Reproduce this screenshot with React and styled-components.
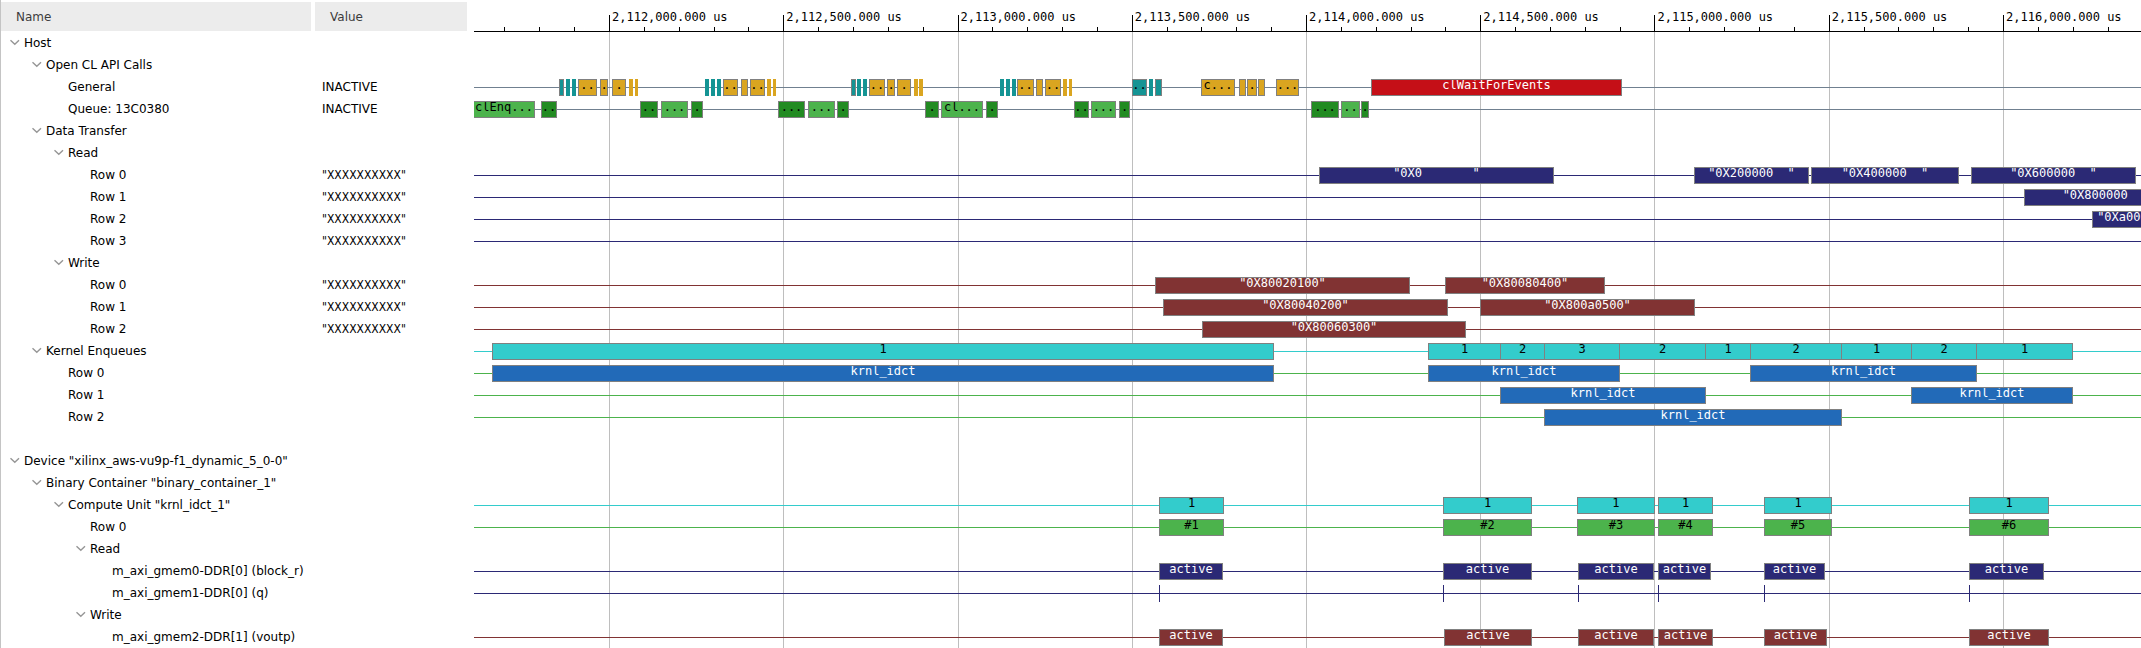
import React from "react";
import styled, { createGlobalStyle } from "styled-components";

const GlobalStyle = createGlobalStyle`
  body {
    margin: 0;
    background: #fff;
    color: #000;
    font: 12px/22px "DejaVu Sans", Verdana, sans-serif;
    overflow-x: hidden;
  }
`;

const colors = {
  slate: "#708090",
  navy: "#2b2975",
  maroon: "#813333",
  cyan: "#33cccc",
  blue: "#226ab8",
  green: "#4cb34c",
  forest: "#228b22",
  gold: "#daa520",
  teal: "#149494",
  red: "#c50f17",
};

const darkText = ["cyan", "green", "forest", "gold", "teal"];

// The visible time window, in timeline units.
const VIEW_START = 474;
const VIEW_SPAN = 1667;
const at = (x) => `${((x - VIEW_START) / VIEW_SPAN) * 100}%`;
const span = (w) => `${(w / VIEW_SPAN) * 100}%`;

const MAJOR_FIRST = 609;
const MAJOR_STEP = 174.25;
const majors = Array.from({ length: 9 }, (_, i) => ({
  x: MAJOR_FIRST + i * MAJOR_STEP,
  label: `${(2112000 + i * 500).toLocaleString("en-US")}.000 us`,
}));
const minors = Array.from({ length: 47 }, (_, i) => i - 3)
  .filter((i) => i % 5 !== 0)
  .map((i) => MAJOR_FIRST + (i * MAJOR_STEP) / 5);

// A bar is [start, end, color, label, flat]; flat bars have no outline.
const teal = (s, e, label = "", flat = false) => [s, e, "teal", label, flat];
const gold = (s, e, label = "", flat = false) => [s, e, "gold", label, flat];
const dk = (s, e, label) => [s, e, "forest", label];
const lt = (s, e, label) => [s, e, "green", label];
const each = (color, list) => list.map(([s, e, label]) => [s, e, color, label]);

const X10 = '"XXXXXXXXXX"';

const rows = [
  { name: "Host", level: 0, open: true },
  { name: "Open CL API Calls", level: 1, open: true },
  {
    name: "General", level: 2, value: "INACTIVE", line: "slate",
    bars: [
      teal(559, 564), teal(566, 570, "", true), teal(572, 576, "", true),
      gold(578, 597, ".."), gold(600, 608, "."), gold(612, 626, "."),
      gold(629, 633, "", true), gold(635, 638, "", true),
      teal(705, 709, "", true), teal(711, 715, "", true), teal(717, 721, "", true),
      gold(723, 738, ".."), gold(741, 748), gold(750, 765, ".."),
      gold(767, 771, "", true), gold(773, 776, "", true),
      teal(851, 856), teal(857, 861, "", true), teal(863, 867, "", true),
      gold(869, 885, ".."), gold(887, 895, "."), gold(897, 911, "."),
      gold(914, 918, "", true), gold(919, 923, "", true),
      teal(1000, 1004, "", true), teal(1006, 1010, "", true), teal(1012, 1016, "", true),
      gold(1017, 1034, ".."), gold(1036, 1043), gold(1045, 1061, ".."),
      gold(1063, 1067, "", true), gold(1069, 1072, "", true),
      teal(1132, 1147, ".."), teal(1149, 1153, "", true), teal(1155, 1162),
      gold(1201, 1235, "c..."), gold(1239, 1246), gold(1247, 1257, "."),
      gold(1258, 1265), gold(1276, 1299, "..."),
      [1371, 1622, "red", "clWaitForEvents"],
    ],
  },
  {
    name: "Queue: 13C0380", level: 2, value: "INACTIVE", line: "slate",
    bars: [
      lt(473, 535, "clEnq..."), dk(541, 557, ".."),
      dk(640, 658, ".."), lt(661, 688, "..."), dk(691, 703, "."),
      dk(778, 805, "..."), lt(808, 835, "..."), dk(837, 849, "."),
      dk(925, 939, "."), lt(941, 983, "cl..."), dk(986, 998, "."),
      dk(1074, 1089, ".."), lt(1091, 1116, "..."), dk(1119, 1130, "."),
      dk(1311, 1339, "..."), lt(1341, 1360, ".."), dk(1361, 1369, "."),
    ],
  },
  { name: "Data Transfer", level: 1, open: true },
  { name: "Read", level: 2, open: true },
  {
    name: "Row 0", level: 3, value: X10, line: "navy",
    bars: each("navy", [
      [1319, 1554, '"0X0       "'], [1694, 1809, '"0X200000  "'],
      [1811, 1959, '"0X400000  "'], [1971, 2136, '"0X600000  "'],
    ]),
  },
  { name: "Row 1", level: 3, value: X10, line: "navy", bars: each("navy", [[2024, 2188, '"0X800000  "']]) },
  { name: "Row 2", level: 3, value: X10, line: "navy", bars: each("navy", [[2092, 2189, '"0Xa00000  "']]) },
  { name: "Row 3", level: 3, value: X10, line: "navy" },
  { name: "Write", level: 2, open: true },
  {
    name: "Row 0", level: 3, value: X10, line: "maroon",
    bars: each("maroon", [[1155, 1410, '"0X80020100"'], [1445, 1605, '"0X80080400"']]),
  },
  {
    name: "Row 1", level: 3, value: X10, line: "maroon",
    bars: each("maroon", [[1163, 1448, '"0X80040200"'], [1480, 1695, '"0X800a0500"']]),
  },
  { name: "Row 2", level: 3, value: X10, line: "maroon", bars: each("maroon", [[1202, 1466, '"0X80060300"']]) },
  {
    name: "Kernel Enqueues", level: 1, open: true, line: "cyan",
    bars: each("cyan", [
      [492, 1274, "1"], [1428, 1501, "1"], [1500, 1545, "2"], [1544, 1620, "3"],
      [1619, 1706, "2"], [1705, 1751, "1"], [1750, 1842, "2"], [1841, 1912, "1"],
      [1911, 1977, "2"], [1976, 2073, "1"],
    ]),
  },
  {
    name: "Row 0", level: 2, line: "green",
    bars: each("blue", [[492, 1274, "krnl_idct"], [1428, 1620, "krnl_idct"], [1750, 1977, "krnl_idct"]]),
  },
  { name: "Row 1", level: 2, line: "green", bars: each("blue", [[1500, 1706, "krnl_idct"], [1911, 2073, "krnl_idct"]]) },
  { name: "Row 2", level: 2, line: "green", bars: each("blue", [[1544, 1842, "krnl_idct"]]) },
  { name: "", level: 0 },
  { name: 'Device "xilinx_aws-vu9p-f1_dynamic_5_0-0"', level: 0, open: true },
  { name: 'Binary Container "binary_container_1"', level: 1, open: true },
  {
    name: 'Compute Unit "krnl_idct_1"', level: 2, open: true, line: "cyan",
    bars: each("cyan", [
      [1159, 1224, "1"], [1443, 1532, "1"], [1577, 1655, "1"],
      [1658, 1713, "1"], [1764, 1832, "1"], [1969, 2049, "1"],
    ]),
  },
  {
    name: "Row 0", level: 3, line: "green",
    bars: each("green", [
      [1159, 1224, "#1"], [1443, 1532, "#2"], [1577, 1655, "#3"],
      [1658, 1713, "#4"], [1764, 1832, "#5"], [1969, 2049, "#6"],
    ]),
  },
  { name: "Read", level: 3, open: true },
  {
    name: "m_axi_gmem0-DDR[0] (block_r)", level: 4, line: "navy",
    bars: each("navy", [
      [1159, 1223, "active"], [1443, 1532, "active"], [1578, 1654, "active"],
      [1658, 1711, "active"], [1764, 1825, "active"], [1969, 2044, "active"],
    ]),
  },
  {
    name: "m_axi_gmem1-DDR[0] (q)", level: 4, line: "navy",
    bars: [1159, 1443, 1578, 1658, 1764, 1969].map((x) => [x, x + 1, "navy", "", true]),
  },
  { name: "Write", level: 3, open: true },
  {
    name: "m_axi_gmem2-DDR[1] (voutp)", level: 4, line: "maroon",
    bars: each("maroon", [
      [1159, 1223, "active"], [1444, 1532, "active"], [1578, 1654, "active"],
      [1658, 1713, "active"], [1764, 1827, "active"], [1969, 2049, "active"],
    ]),
  },
];

const Viewer = styled.main`
  display: flex;
  gap: 7px;
`;

const TreePane = styled.section`
  flex: none;
  border-left: 1px solid #c4c4c4;
  padding-top: 2px;
`;

const TreeTable = styled.table`
  table-layout: fixed;
  border-collapse: collapse;
  width: 466px;
`;

const HeadCell = styled.th`
  width: ${(p) => p.$width}px;
  height: 29px;
  box-sizing: border-box;
  padding: 2px 0 0 15px;
  background: #ececec;
  color: #3c3c3c;
  font-weight: normal;
  text-align: left;
`;

const HeadGap = styled.td`
  width: 4px;
  padding: 0;
`;

const TreeHead = styled.thead`
  border-bottom: 1px solid #fff;
`;

const Cell = styled.td`
  height: 22px;
  padding: 0 0 0 7px;
  white-space: nowrap;
`;

const ValueCell = styled(Cell)`
  font-family: ${(p) => (p.$data ? '"DejaVu Sans Condensed", "DejaVu Sans", sans-serif' : "inherit")};
`;

const NameCell = styled(Cell)`
  padding-left: ${(p) => 8 + p.$level * 22}px;
`;

const NameLine = styled.div`
  display: flex;
  align-items: center;
`;

const Toggle = styled.button`
  display: flex;
  align-items: center;
  width: 15px;
  height: 22px;
  border: 0;
  padding: 0;
  background: none;
`;

const LeafSpace = styled.span`
  width: 15px;
`;

const Plot = styled.section`
  flex: 1;
  min-width: 0;
  position: relative;
  overflow: hidden;
  font-family: "DejaVu Sans Mono", monospace;
`;

const Ruler = styled.div`
  position: relative;
  height: 31px;
  border-bottom: 1px solid #000;
`;

const Tick = styled.div`
  position: absolute;
  bottom: 0;
  height: ${(p) => (p.$major ? 16 : 4)}px;
  border-left: 1px solid #000;
  padding-left: 2px;
  line-height: 4px;
  white-space: nowrap;
`;

const GridLine = styled.div`
  position: absolute;
  top: 32px;
  bottom: 0;
  width: 1px;
  background: #bebebe;
`;

const Lane = styled.div`
  position: relative;
  height: 22px;
`;

const LaneLine = styled.div`
  position: absolute;
  top: 11px;
  left: 0;
  right: 0;
  height: 1px;
  background: ${(p) => colors[p.$color]};
`;

const Bar = styled.div`
  position: absolute;
  top: 3px;
  box-sizing: border-box;
  height: 17px;
  display: flex;
  justify-content: center;
  overflow: hidden;
  border: ${(p) => (p.$flat ? "0" : "1px solid #808080")};
  background: ${(p) => colors[p.$color]};
  color: ${(p) => (darkText.includes(p.$color) ? "#000" : "#fff")};
  line-height: 10px;
  white-space: pre;
`;

const Chevron = () => (
  <svg width="11" height="7" viewBox="0 0 11 7" aria-hidden="true">
    <path d="M1.5 1.2 L5.8 5.2 L10 1.2" fill="none" stroke="#969696" strokeWidth="1.4" />
  </svg>
);

const TreeRow = ({ row }) => (
  <tr>
    <NameCell $level={row.level}>
      <NameLine>
        {row.open ? (
          <Toggle type="button" aria-expanded="true" aria-label={`Collapse ${row.name}`}>
            <Chevron />
          </Toggle>
        ) : (
          <LeafSpace />
        )}
        {row.name}
      </NameLine>
    </NameCell>
    <td />
    <ValueCell $data={row.value === X10}>{row.value}</ValueCell>
  </tr>
);

const PlotLane = ({ row }) => (
  <Lane>
    {row.line && <LaneLine $color={row.line} />}
    {(row.bars || []).map(([start, end, color, label, flat]) => (
      <Bar key={start} $color={color} $flat={flat} style={{ left: at(start), width: span(end - start) }}>
        {label}
      </Bar>
    ))}
  </Lane>
);

export default function App() {
  return (
    <>
      <GlobalStyle />
      <Viewer>
        <TreePane>
          <TreeTable>
            <TreeHead>
              <tr>
                <HeadCell $width={310}>Name</HeadCell>
                <HeadGap />
                <HeadCell $width={152}>Value</HeadCell>
              </tr>
            </TreeHead>
            <tbody>
              {rows.map((row, i) => (
                <TreeRow key={i} row={row} />
              ))}
            </tbody>
          </TreeTable>
        </TreePane>
        <Plot>
          <Ruler>
            {minors.map((x) => (
              <Tick key={x} style={{ left: at(x) }} />
            ))}
            {majors.map(({ x, label }) => (
              <Tick key={x} $major style={{ left: at(x) }}>
                {label}
              </Tick>
            ))}
          </Ruler>
          {majors.map(({ x }) => (
            <GridLine key={x} style={{ left: at(x) }} />
          ))}
          {rows.map((row, i) => (
            <PlotLane key={i} row={row} />
          ))}
        </Plot>
      </Viewer>
    </>
  );
}
